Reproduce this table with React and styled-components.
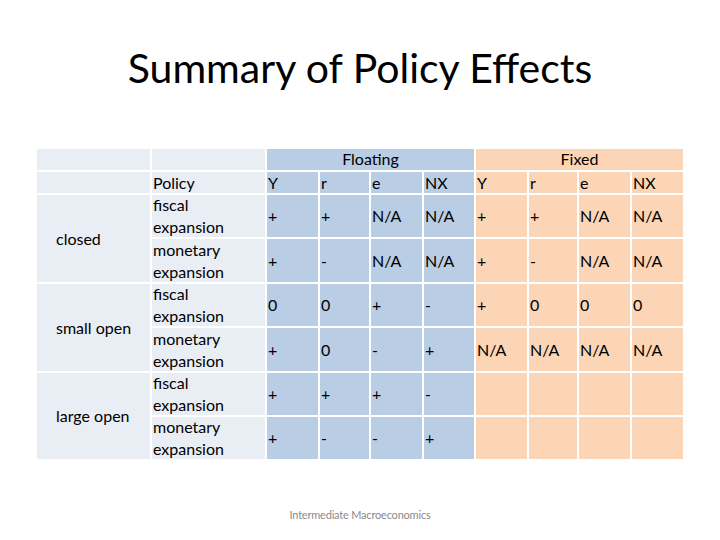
import React from 'react';
import styled, { createGlobalStyle } from 'styled-components';

const GlobalStyle = createGlobalStyle`
   body {
      margin: 0;
      background: #ffffff;
      font-family: Lato, "Open Sans", sans-serif;
      color: #000;
   }
`;

const Slide = styled.div`
   width: 720px;
   height: 540px;
   display: flex;
   flex-direction: column;
   align-items: center;
`;

const Title = styled.h1`
   margin: 43px 0 0 0;
   height: 57px;
   font-weight: normal;
   font-size: 41px;
   line-height: 49px;
`;

const Grid = styled.div`
   margin: 49px 0 0 0;
   align-self: flex-start;
   margin-left: 37px;
   display: grid;
   grid-template-columns: 113px 113px 51px 49px 51px 50px 51px 48px 51px 51px;
   grid-template-rows: 21px 21px 42px 43px 42px 43px 42px 42px;
   gap: 2px;
`;

const tones = {
   side: '#e9edf4',
   float: '#b9cde5',
   fixed: '#fbd5b5',
};

const Cell = styled.div`
   background: ${(p) => tones[p.tone]};
   display: flex;
   align-items: center;
   justify-content: ${(p) => (p.center ? 'center' : 'flex-start')};
   padding-left: ${(p) => (p.center ? 0 : p.indent || 1)}px;
   font-size: 16px;
   line-height: 22px;
   grid-column: ${(p) => p.col || 'auto'};
   grid-row: ${(p) => p.row || 'auto'};
   overflow: visible;
   white-space: nowrap;
`;

const HeadLabel = styled.span`
   margin-top: -2px;
`;

const Policy = styled.div`
   white-space: normal;
   width: 80px;
`;

const Footer = styled.div`
   margin-top: 49px;
   font-size: 11px;
   color: #8a8a8a;
   letter-spacing: -0.2px;
`;

const vars = ['Y', 'r', 'e', 'NX'];

const rows = [
   { policy: 'fiscal expansion', float: ['+', '+', 'N/A', 'N/A'], fixed: ['+', '+', 'N/A', 'N/A'] },
   { policy: 'monetary expansion', float: ['+', '-', 'N/A', 'N/A'], fixed: ['+', '-', 'N/A', 'N/A'] },
   { policy: 'fiscal expansion', float: ['0', '0', '+', '-'], fixed: ['+', '0', '0', '0'] },
   { policy: 'monetary expansion', float: ['+', '0', '-', '+'], fixed: ['N/A', 'N/A', 'N/A', 'N/A'] },
   { policy: 'fiscal expansion', float: ['+', '+', '+', '-'], fixed: ['', '', '', ''] },
   { policy: 'monetary expansion', float: ['+', '-', '-', '+'], fixed: ['', '', '', ''] },
];

const economies = ['closed', 'small open', 'large open'];

const App = () => {
   return (
      <Slide>
         <GlobalStyle />
         <Title>Summary of Policy Effects</Title>
         <Grid>
            <Cell tone="side" col="1" row="1" />
            <Cell tone="side" col="2" row="1" />
            <Cell tone="float" col="3 / span 4" row="1" center>
               <HeadLabel>Floating</HeadLabel>
            </Cell>
            <Cell tone="fixed" col="7 / span 4" row="1" center>
               <HeadLabel>Fixed</HeadLabel>
            </Cell>

            <Cell tone="side" col="1" row="2" />
            <Cell tone="side" col="2" row="2">Policy</Cell>
            {vars.map((v) => (
               <Cell key={'f' + v} tone="float" row="2">{v}</Cell>
            ))}
            {vars.map((v) => (
               <Cell key={'x' + v} tone="fixed" row="2">{v}</Cell>
            ))}

            {economies.map((name, i) => (
               <Cell key={name} tone="side" col="1" row={`${3 + i * 2} / span 2`} indent={19}>
                  {name}
               </Cell>
            ))}

            {rows.map((r, i) => (
               <React.Fragment key={i}>
                  <Cell tone="side" col="2" row={3 + i}>
                     <Policy>{r.policy}</Policy>
                  </Cell>
                  {r.float.map((v, j) => (
                     <Cell key={'f' + j} tone="float" col={3 + j} row={3 + i}>{v}</Cell>
                  ))}
                  {r.fixed.map((v, j) => (
                     <Cell key={'x' + j} tone="fixed" col={7 + j} row={3 + i}>{v}</Cell>
                  ))}
               </React.Fragment>
            ))}
         </Grid>
         <Footer>Intermediate Macroeconomics</Footer>
      </Slide>
   );
};

export default App;
